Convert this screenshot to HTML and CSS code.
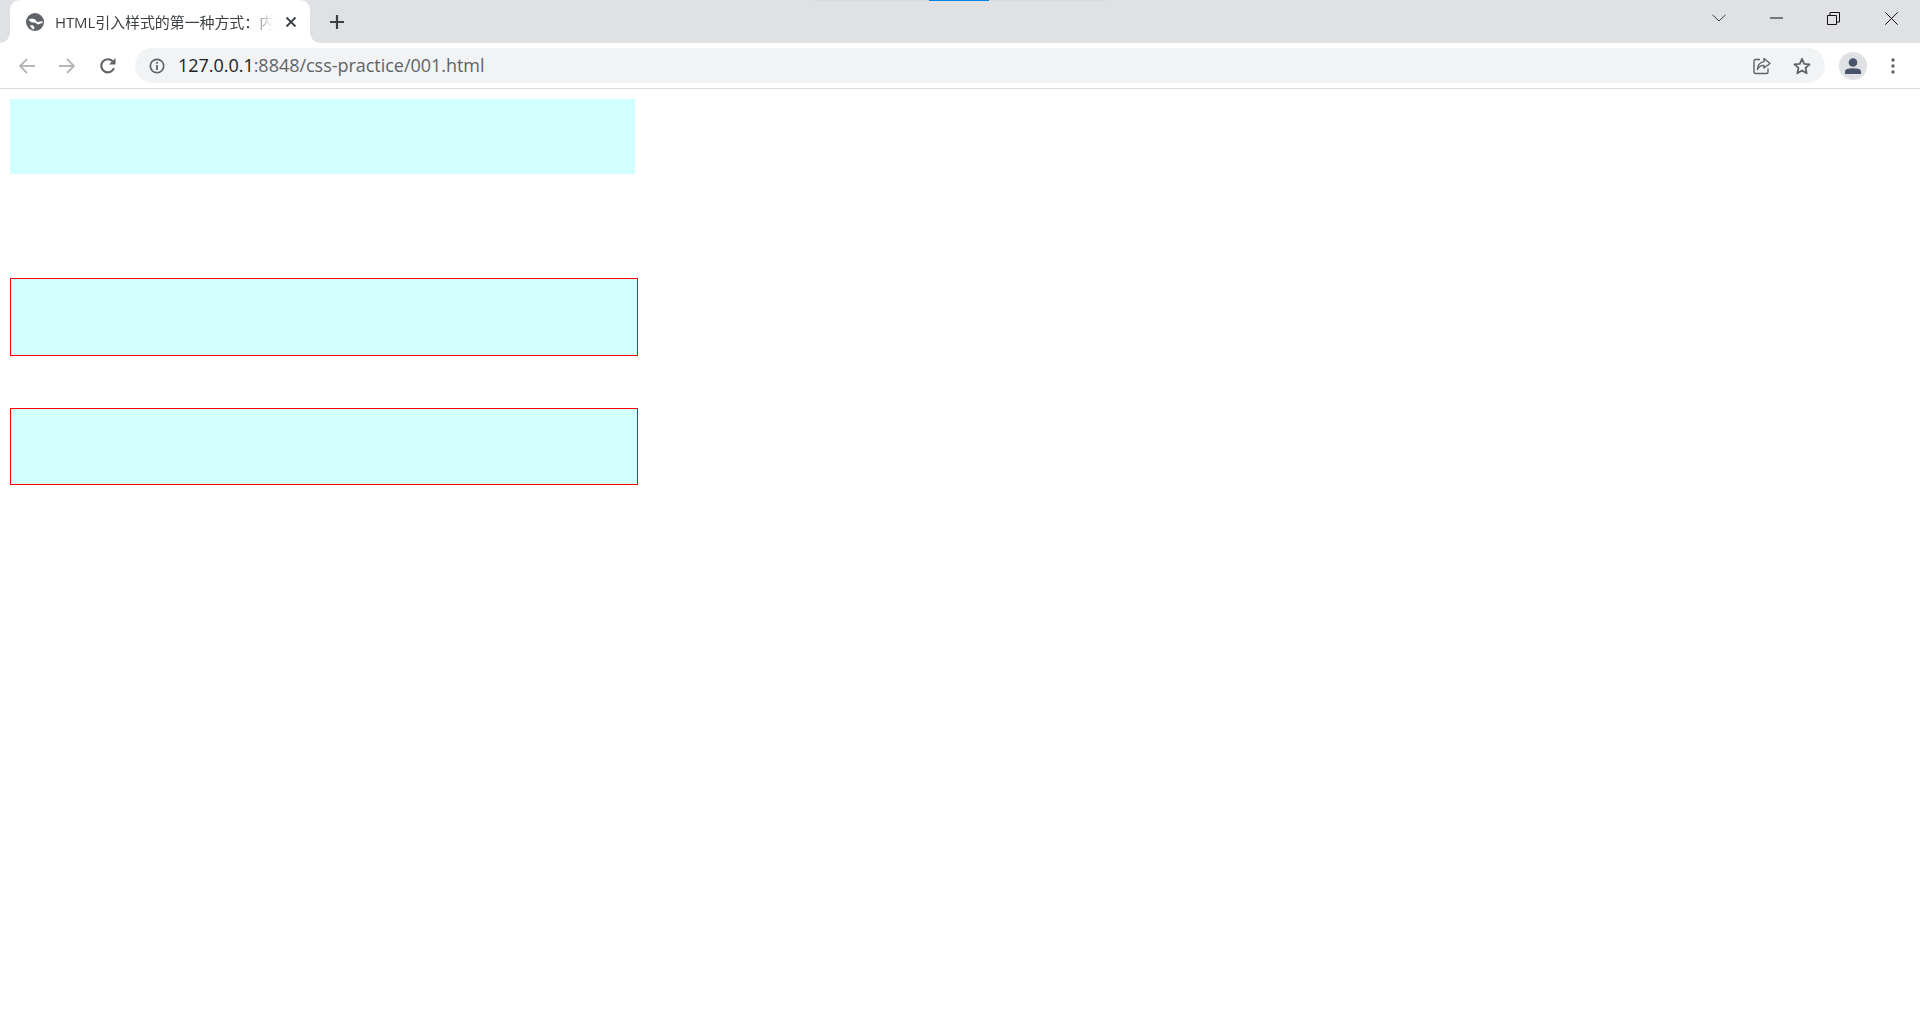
FILE: index.html
```html
<!DOCTYPE html>
<html lang="zh-CN">
<head>
    <meta charset="UTF-8">
    <meta name="viewport" content="width=device-width, initial-scale=1.0">
    <title>HTML引入样式的第一种方式：内联样式</title>
    <link rel="stylesheet" href="styles.css">
</head>
<body>
    <div class="chrome">
        <div class="tabstrip">
            <div class="drag-line"><span class="drag-blue"></span></div>
            <div class="tab">
                <svg class="favicon" width="18" height="18" viewBox="0 0 18 18">
                    <circle cx="9" cy="9" r="9" fill="#5f6368"/>
                    <path d="M2.4 6.4 L6 5.4 L9.4 6.6 L11 9 L16.4 8.2 L16.8 9.8 L12 11.4 L9 9.8 L5 9.2 Z M3.8 12.2 L6.8 12.2 L8.6 14.6 L7.8 16.6 L5.6 15.2 Z" fill="#fff"/>
                </svg>
                <span class="tab-title">HTML引入样式的第一种方式：内联样式</span>
                <svg class="tab-close" width="12" height="12" viewBox="0 0 12 12">
                    <path d="M1.5 1.5 L10.5 10.5 M10.5 1.5 L1.5 10.5" stroke="#3c4043" stroke-width="1.8" fill="none"/>
                </svg>
            </div>
            <svg class="new-tab" width="16" height="16" viewBox="0 0 16 16">
                <path d="M8 1 V15 M1 8 H15" stroke="#3c4043" stroke-width="2.2" fill="none"/>
            </svg>
            <div class="window-controls">
                <svg class="win-chevron" width="14" height="8" viewBox="0 0 14 8">
                    <path d="M.5 .8 L7 7 L13.5 .8" stroke="#3c4043" fill="none"/>
                </svg>
                <svg class="win-min" width="13" height="2" viewBox="0 0 13 2">
                    <path d="M0 1 H13" stroke="#111" fill="none"/>
                </svg>
                <svg class="win-restore" width="13" height="13" viewBox="0 0 13 13">
                    <path d="M.5 3.5 H9.5 V12.5 H.5 Z M3 3.5 V.5 H12.5 V10 H9.5" stroke="#111" fill="none"/>
                </svg>
                <svg class="win-close" width="13" height="13" viewBox="0 0 13 13">
                    <path d="M.3 .3 L12.7 12.7 M12.7 .3 L.3 12.7" stroke="#111" fill="none"/>
                </svg>
            </div>
        </div>
        <div class="toolbar">
            <svg class="nav-back" width="16" height="16" viewBox="0 0 16 16">
                <path d="M16 8 H1.5 M8 1 L1 8 L8 15" stroke="#b4b6b9" stroke-width="1.9" fill="none"/>
            </svg>
            <svg class="nav-forward" width="16" height="16" viewBox="0 0 16 16">
                <path d="M0 8 H14.5 M8 1 L15 8 L8 15" stroke="#b4b6b9" stroke-width="1.9" fill="none"/>
            </svg>
            <svg class="nav-reload" width="18" height="18" viewBox="0 0 18 18">
                <path d="M15 11.2 A6.6 6.6 0 1 1 13.7 4.3" stroke="#5f6368" stroke-width="2.1" fill="none"/>
                <path d="M16.5 1 V7.6 H10 Z" fill="#5f6368"/>
            </svg>
            <div class="omnibox">
                <svg class="site-info" width="16" height="16" viewBox="0 0 16 16">
                    <circle cx="8" cy="8" r="6.7" stroke="#5f6368" stroke-width="1.7" fill="none"/>
                    <path d="M8 7 V12 M8 4 V5.8" stroke="#5f6368" stroke-width="1.8" fill="none"/>
                </svg>
                <span class="url"><span class="url-host">127.0.0.1</span>:8848/css-practice/001.html</span>
                <svg class="omni-share" width="18" height="18" viewBox="0 0 18 18">
                    <path d="M7 2.5 H2.5 Q1 2.5 1 4 V15 Q1 16.5 2.5 16.5 H13.5 Q15 16.5 15 15 V11.5" stroke="#5f6368" stroke-width="1.4" fill="none"/>
                    <path d="M11 1.5 L17 6.5 L11 11 V8.4 Q6.5 8.2 4.5 12.5 Q4.8 5.5 11 4.6 Z" stroke="#5f6368" stroke-width="1.4" fill="none" stroke-linejoin="round"/>
                </svg>
                <svg class="omni-star" width="18" height="18" viewBox="0 0 18 18">
                    <path d="M9 1.8 L11.2 6.8 L16.6 7.3 L12.5 10.9 L13.7 16.2 L9 13.4 L4.3 16.2 L5.5 10.9 L1.4 7.3 L6.8 6.8 Z" stroke="#5f6368" stroke-width="1.8" fill="none" stroke-linejoin="round"/>
                </svg>
            </div>
            <div class="avatar">
                <svg width="18" height="18" viewBox="0 0 18 18">
                    <circle cx="9" cy="5.5" r="4.3" fill="#48546b"/>
                    <path d="M1 17 V14.5 Q1 11.2 9 11.2 Q17 11.2 17 14.5 V17 Z" fill="#48546b"/>
                </svg>
            </div>
            <svg class="menu-dots" width="4" height="16" viewBox="0 0 4 16">
                <circle cx="2" cy="2" r="1.7" fill="#5f6368"/>
                <circle cx="2" cy="8" r="1.7" fill="#5f6368"/>
                <circle cx="2" cy="14" r="1.7" fill="#5f6368"/>
            </svg>
        </div>
    </div>

    <div class="page">
        <div class="box"></div>
        <div class="box box-outline box-second"></div>
        <div class="box box-outline box-third"></div>
    </div>
</body>
</html>
```

FILE: styles.css
```css
* {
    box-sizing: border-box;
}
html, body {
    height: 100%;
}
body {
    margin: 0;
    background-color: #fff;
    font-family: "Open Sans", "Noto Sans CJK SC", sans-serif;
    overflow: hidden;
}
svg {
    display: block;
    flex: none;
}

/* browser frame */
.chrome {
    height: 89px;
    border-bottom: 1px solid #dadce0;
}
.tabstrip {
    position: relative;
    display: flex;
    align-items: center;
    height: 43px;
    background-color: #dfe1e5;
}
.drag-line {
    position: absolute;
    top: 0;
    left: 812px;
    width: 295px;
    height: 1px;
    background-color: #d8dadd;
}
.drag-blue {
    display: block;
    width: 60px;
    height: 1px;
    margin-left: 117px;
    background-color: #0a84e0;
}
.tab {
    position: relative;
    display: flex;
    align-items: center;
    width: 300px;
    height: 43px;
    margin-left: 10px;
    padding: 0 13px 0 16px;
    background-color: #fff;
    border-radius: 10px 10px 0 0;
}
.tab::before,
.tab::after {
    content: "";
    position: absolute;
    bottom: 0;
    width: 10px;
    height: 10px;
}
.tab::before {
    left: -10px;
    background: radial-gradient(circle at 0 0, transparent 9.5px, #fff 10px);
}
.tab::after {
    right: -10px;
    background: radial-gradient(circle at 100% 0, transparent 9.5px, #fff 10px);
}
.tab-title {
    flex: 1;
    margin: 0 11px;
    overflow: hidden;
    white-space: nowrap;
    font-size: 15px;
    letter-spacing: -0.1px;
    color: #3c4043;
    -webkit-mask-image: linear-gradient(to right, #000 195px, transparent 218px);
    mask-image: linear-gradient(to right, #000 195px, transparent 218px);
}
.new-tab {
    margin-left: 19px;
}
.window-controls {
    display: flex;
    align-items: center;
    margin-left: auto;
    margin-top: -7px;
    padding-right: 22px;
}
.win-min {
    margin-left: 44px;
}
.win-restore {
    margin-left: 44px;
}
.win-close {
    margin-left: 45px;
}

/* toolbar */
.toolbar {
    display: flex;
    align-items: center;
    height: 45px;
    padding-left: 19px;
}
.nav-forward {
    margin-left: 24px;
}
.nav-reload {
    margin-left: 24px;
}
.omnibox {
    display: flex;
    align-items: center;
    width: 1690px;
    height: 35px;
    margin-left: 18px;
    padding: 0 14px 0 14px;
    background-color: #f1f3f4;
    border-radius: 18px;
}
.url {
    flex: 1;
    margin-left: 13px;
    padding-bottom: 2px;
    font-size: 18px;
    letter-spacing: -0.03px;
    color: #5f6368;
    white-space: nowrap;
}
.url-host {
    color: #202124;
}
.omni-star {
    margin-left: 22px;
}
.avatar {
    display: flex;
    align-items: center;
    justify-content: center;
    width: 28px;
    height: 28px;
    margin-left: 14px;
    background-color: #dfe1e5;
    border-radius: 50%;
}
.menu-dots {
    margin-left: 24px;
}

/* page content */
.page {
    padding: 10px;
}
.box {
    width: 625px;
    height: 75px;
    background-color: #d1ffff;
}
.box-outline {
    width: 628px;
    height: 77px;
    border: 1px solid #ff0000;
}
.box-second {
    height: 78px;
    margin-top: 104px;
}
.box-third {
    margin-top: 52px;
}
```
